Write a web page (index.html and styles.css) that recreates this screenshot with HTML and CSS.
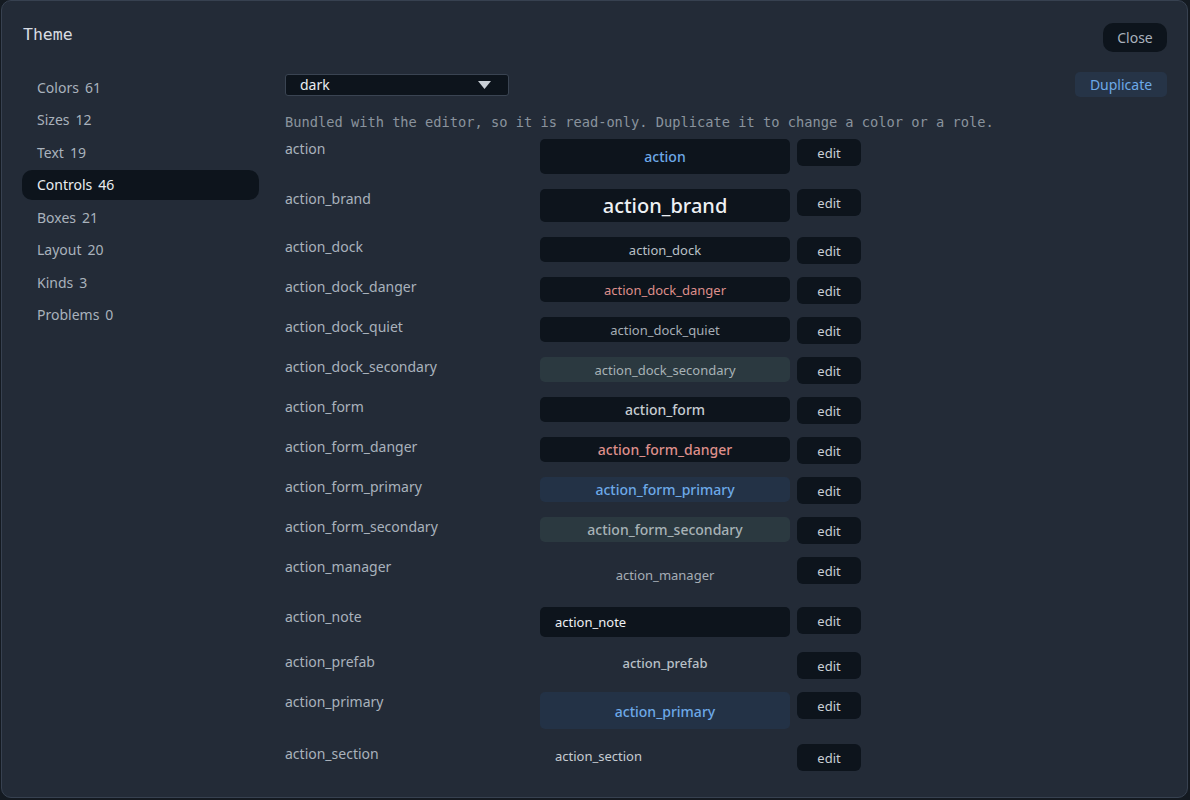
FILE: index.html
```html
<!doctype html>
<html lang="en">
  <head>
    <meta charset="UTF-8" />
    <meta name="viewport" content="width=device-width, initial-scale=1.0" />
    <title>Theme</title>
    <link rel="stylesheet" href="styles.css">
  </head>
  <body>
    <div class="dialog">
      <header class="dialog-head">
        <h1>Theme</h1>
        <button class="btn-close">Close</button>
      </header>

      <div class="dialog-body">
        <nav class="sections">
          <a class="section">Colors <span>61</span></a>
          <a class="section">Sizes <span>12</span></a>
          <a class="section">Text <span>19</span></a>
          <a class="section active">Controls <span>46</span></a>
          <a class="section">Boxes <span>21</span></a>
          <a class="section">Layout <span>20</span></a>
          <a class="section">Kinds <span>3</span></a>
          <a class="section">Problems <span>0</span></a>
        </nav>

        <main class="roles">
          <div class="toolbar">
            <div class="picker">
              <span>dark</span>
              <svg width="13" height="8" viewBox="0 0 13 8"><path d="M0 0h13L6.5 8z" fill="#c9cfd6"/></svg>
            </div>
            <button class="btn-duplicate">Duplicate</button>
          </div>

          <p class="hint">Bundled with the editor, so it is read-only. Duplicate it to change a color or a role.</p>

          <div class="role-list">
            <div class="role">
              <span class="role-name">action</span>
              <div class="preview p-action">action</div>
              <button class="btn-edit">edit</button>
            </div>
            <div class="role">
              <span class="role-name">action_brand</span>
              <div class="preview p-brand">action_brand</div>
              <button class="btn-edit">edit</button>
            </div>
            <div class="role">
              <span class="role-name">action_dock</span>
              <div class="preview p-dock">action_dock</div>
              <button class="btn-edit">edit</button>
            </div>
            <div class="role">
              <span class="role-name">action_dock_danger</span>
              <div class="preview p-dock danger">action_dock_danger</div>
              <button class="btn-edit">edit</button>
            </div>
            <div class="role">
              <span class="role-name">action_dock_quiet</span>
              <div class="preview p-dock quiet">action_dock_quiet</div>
              <button class="btn-edit">edit</button>
            </div>
            <div class="role">
              <span class="role-name">action_dock_secondary</span>
              <div class="preview p-dock secondary">action_dock_secondary</div>
              <button class="btn-edit">edit</button>
            </div>
            <div class="role">
              <span class="role-name">action_form</span>
              <div class="preview p-form">action_form</div>
              <button class="btn-edit">edit</button>
            </div>
            <div class="role">
              <span class="role-name">action_form_danger</span>
              <div class="preview p-form danger">action_form_danger</div>
              <button class="btn-edit">edit</button>
            </div>
            <div class="role">
              <span class="role-name">action_form_primary</span>
              <div class="preview p-form primary">action_form_primary</div>
              <button class="btn-edit">edit</button>
            </div>
            <div class="role">
              <span class="role-name">action_form_secondary</span>
              <div class="preview p-form secondary">action_form_secondary</div>
              <button class="btn-edit">edit</button>
            </div>
            <div class="role">
              <span class="role-name">action_manager</span>
              <div class="preview p-manager">action_manager</div>
              <button class="btn-edit">edit</button>
            </div>
            <div class="role">
              <span class="role-name">action_note</span>
              <div class="preview p-note">action_note</div>
              <button class="btn-edit">edit</button>
            </div>
            <div class="role">
              <span class="role-name">action_prefab</span>
              <div class="preview p-prefab">action_prefab</div>
              <button class="btn-edit">edit</button>
            </div>
            <div class="role">
              <span class="role-name">action_primary</span>
              <div class="preview p-primary">action_primary</div>
              <button class="btn-edit">edit</button>
            </div>
            <div class="role">
              <span class="role-name">action_section</span>
              <div class="preview p-section">action_section</div>
              <button class="btn-edit">edit</button>
            </div>
          </div>
        </main>
      </div>
    </div>
  </body>
</html>
```

FILE: styles.css
```css
* {
  box-sizing: border-box;
}

html,
body {
  height: 100%;
}

body {
  margin: 0;
  padding: 0 2px 2px 1px;
  background-color: #141a21;
  font-family: "Noto Sans", sans-serif;
  font-size: 14px;
  color: #a9b2bc;
  overflow: hidden;
}

button {
  font-family: inherit;
  border: none;
  cursor: pointer;
}

.dialog {
  height: 100%;
  background-color: #232b37;
  border: 1px solid #374150;
  border-radius: 10px;
  overflow: hidden;
}

/* header */

.dialog-head {
  display: flex;
  justify-content: space-between;
  align-items: flex-start;
  padding: 22px 20px 0 21px;
  height: 71px;
}

.dialog-head h1 {
  margin: 0;
  padding-top: 1px;
  font-family: "DejaVu Sans Mono", monospace;
  font-size: 16.5px;
  font-weight: normal;
  line-height: 22px;
  color: #d7dce2;
}

.btn-close {
  width: 64px;
  height: 29px;
  border-radius: 10px;
  background-color: #0d141c;
  color: #a9b2bc;
  font-size: 14px;
}

/* layout */

.dialog-body {
  display: grid;
  grid-template-columns: 237px 1fr;
  column-gap: 26px;
  padding: 0 20px;
}

.sections {
  display: flex;
  flex-direction: column;
  gap: 2.5px;
}

.section {
  display: flex;
  align-items: center;
  gap: 6px;
  height: 30px;
  padding-left: 15px;
  border-radius: 10px;
  color: #a9b2bc;
}

.section.active {
  background-color: #0d141c;
  color: #e9edf1;
}

/* main column */

.toolbar {
  display: flex;
  justify-content: space-between;
  align-items: center;
  height: 25px;
}

.picker {
  display: flex;
  justify-content: space-between;
  align-items: center;
  width: 224px;
  height: 22px;
  padding: 0 17px 0 14px;
  background-color: #0d141c;
  border: 1px solid #3a4452;
  border-radius: 3px;
  color: #e9edf1;
}

.btn-duplicate {
  width: 92px;
  height: 25px;
  border-radius: 5px;
  background-color: #263447;
  color: #6da9e8;
  font-size: 14px;
}

.hint {
  margin: 17px 0 8px;
  font-family: "DejaVu Sans Mono", monospace;
  font-size: 13.7px;
  line-height: 17px;
  color: #8a939d;
}

.role-list {
  display: flex;
  flex-direction: column;
  gap: 13px;
}

.role {
  display: grid;
  grid-template-columns: 248px 250px 64px;
  column-gap: 7px;
  align-items: start;
}

.role-name {
  line-height: 20px;
  color: #a9b2bc;
}

.btn-edit {
  height: 27px;
  border-radius: 6px;
  background-color: #0d141c;
  color: #c9cfd6;
  font-size: 13px;
}

/* role previews */

.preview {
  display: flex;
  justify-content: center;
  align-items: center;
  margin-bottom: 2px;
  border-radius: 5px;
  background-color: #0d141c;
  color: #c9cfd6;
  font-size: 13px;
}

.p-action {
  height: 35px;
  color: #6da9e8;
  font-size: 14px;
  font-weight: 500;
}

.p-brand {
  height: 33px;
  color: #eef1f4;
  font-size: 20px;
  font-weight: 500;
}

.p-dock {
  height: 25px;
  color: #b9c0c7;
}

.p-form {
  height: 25px;
  color: #c6ccd2;
  font-size: 14px;
  font-weight: 500;
}

.preview.danger {
  color: #de8f8b;
}

.preview.quiet {
  color: #a5adb5;
}

.preview.secondary {
  background-color: #2b3940;
  color: #a7b2b6;
}

.preview.primary {
  background-color: #233246;
  color: #6da9e8;
}

.p-manager {
  height: 35px;
  padding-top: 1px;
  background: none;
  color: #a5adb5;
}

.p-note {
  justify-content: flex-start;
  height: 30px;
  padding-left: 15px;
  color: #eef1f4;
}

.p-prefab {
  height: 22px;
  background: none;
  color: #b9c0c7;
  font-weight: 500;
}

.p-primary {
  height: 37px;
  padding-top: 2px;
  background-color: #233246;
  color: #6da9e8;
  font-size: 14px;
  font-weight: 500;
}

.p-section {
  justify-content: flex-start;
  height: 24px;
  padding-left: 15px;
  background: none;
  color: #c6ccd2;
}
```
